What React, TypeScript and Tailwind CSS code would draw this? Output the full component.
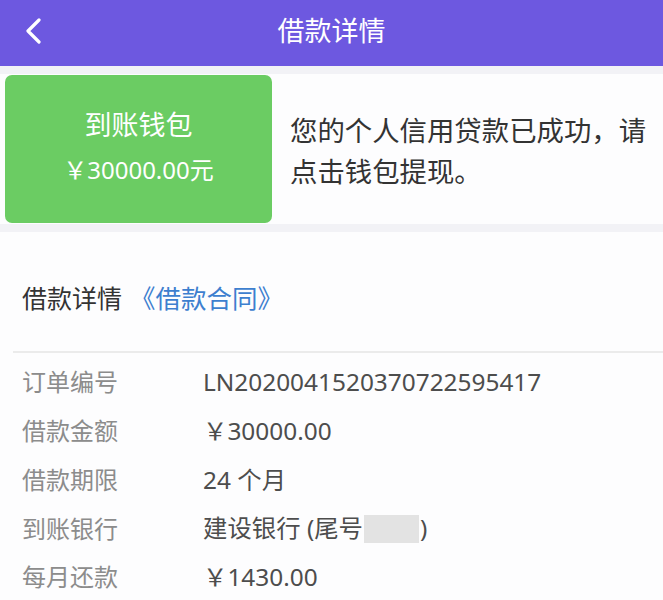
import React from "react";

const font = { fontFamily: '"Noto Sans", "Noto Sans CJK SC", sans-serif' };

const rows: [string, React.ReactNode][] = [
  ["订单编号", "LN2020041520370722595417"],
  ["借款金额", "￥30000.00"],
  ["借款期限", "24 个月"],
  [
    "到账银行",
    <span className="flex items-center">
      建设银行 (尾号
      <span className="inline-block w-[55px] h-[28px] bg-[#e3e3e3] mx-[1px]" />
      )
    </span>,
  ],
  ["每月还款", "￥1430.00"],
];

export default function App() {
  return (
    <div className="w-[663px] h-[600px] overflow-hidden bg-white" style={font}>
      <div className="relative h-[66px] bg-[#6d58e0] flex items-center justify-center">
        <svg
          className="absolute left-[24px] top-[18px]"
          width="20"
          height="26"
          viewBox="0 0 20 26"
          fill="none"
        >
          <path d="M15 2 L4 13 L15 24" stroke="white" strokeWidth="3.2" strokeLinecap="round" strokeLinejoin="round" />
        </svg>
        <span className="text-white text-[27px] leading-none mb-[6px]">借款详情</span>
      </div>
      <div className="bg-[#f2f2f6] pt-[8px] pb-[8px]">
        <div className="bg-[#fdfdfe] flex h-[150px]">
          <div className="ml-[5px] mt-[1px] w-[267px] h-[148px] rounded-[7px] bg-[#6bcc63] flex flex-col items-center text-white">
            <div className="text-[27px] leading-none mt-[36px]">到账钱包</div>
            <div className="text-[24px] leading-none mt-[20px]">￥30000.00元</div>
          </div>
          <div className="flex-1 pl-[18px] pr-[6px] flex items-center pt-[4px] text-[27.4px] leading-[41px] text-[#333]">
            您的个人信用贷款已成功，请点击钱包提现。
          </div>
        </div>
      </div>
      <div className="bg-[#fdfdfe]">
        <div className="pt-[48px] pl-[22px] h-[84px] flex items-start">
          <span className="text-[25px] leading-[36px] text-[#333]">借款详情</span>
          <span className="text-[25.5px] leading-[36px] text-[#3d7fcf] ml-[8px]">《借款合同》</span>
        </div>
        <div className="mt-[35px] ml-[13px] h-[2px] bg-[#ebebeb]" />
        <div className="pt-[5px]">
          {rows.map(([k, v], i) => (
            <div key={i} className="flex items-center h-[48.75px] pl-[22px] text-[24px]">
              <span className="w-[181px] text-[#8c8c8c]">{k}</span>
              <span className="text-[#4d4d4d] text-[24.4px]">{v}</span>
            </div>
          ))}
        </div>
      </div>
    </div>
  );
}
